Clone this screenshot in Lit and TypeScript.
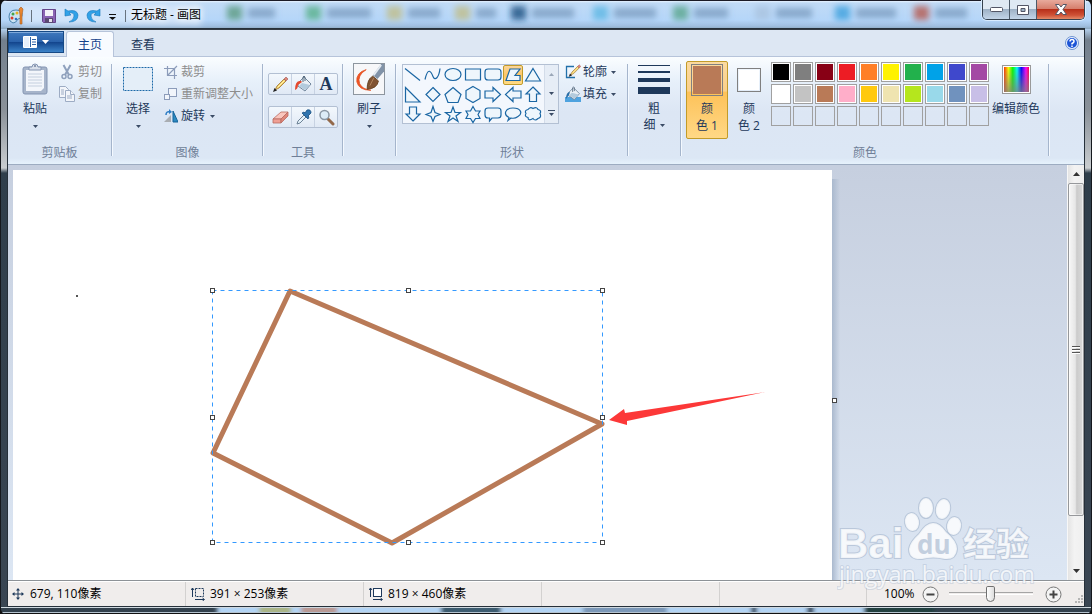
import { LitElement, html, css, svg, nothing } from "lit";
import { customElement, property, state } from "lit/decorators.js";
import { classMap } from "lit/directives/class-map.js";
import { styleMap } from "lit/directives/style-map.js";

/* A titled block of the ribbon, closed by a vertical rule. */
@customElement("ribbon-group")
class RibbonGroup extends LitElement {
  @property() label = "";
  static styles = css`
    :host {
      display: flex;
      flex-direction: column;
      box-sizing: border-box;
      position: relative;
      padding: 4px 0 3px;
    }
    :host::after {
      content: "";
      position: absolute;
      right: 0;
      top: 7px;
      bottom: 8px;
      width: 1px;
      background: #a5b5cc;
      border-right: 1px solid #f4f9ff;
    }
    .body { display: flex; flex: 1; align-items: flex-start; }
    .label { text-align: center; line-height: 16px; color: #6f7f98; padding-right: 2px; }
  `;
  render() {
    return html`<div class="body"><slot></slot></div>
      ${this.label ? html`<div class="label">${this.label}</div>` : nothing}`;
  }
}

const PALETTE = [
  ["#000000", "#7f7f7f", "#880015", "#ed1c24", "#ff7f27", "#fff200", "#22b14c", "#00a2e8", "#3f48cc", "#a349a4"],
  ["#ffffff", "#c3c3c3", "#b97a57", "#ffaec9", "#ffc90e", "#efe4b0", "#b5e61d", "#99d9ea", "#7092be", "#c8bfe7"],
  ["", "", "", "", "", "", "", "", "", ""],
];

const SHAPES: [string, string][] = [
  ["直线", "M2 3 17 15"],
  ["曲线", "M2 14C5 1 8 6 10 11S16 12 17 3"],
  ["椭圆形", "M2 9a8 6 0 1 0 16 0a8 6 0 1 0-16 0"],
  ["矩形", "M2.500 3.500h15v11h-15z"],
  ["圆角矩形", "M5 3.500h10q3 0 3 3v5q0 3-3 3H5q-3 0-3-3v-5q0-3 3-3z"],
  ["多边形", "M7 3.500h10l-5 6.500h5v5H3z"],
  ["三角形", "M10 3 17.500 15.500h-15z"],
  ["直角三角形", "M2.500 2v14.500H17z"],
  ["菱形", "M10 2 17 9 10 16 3 9z"],
  ["五边形", "M10 2 18 9 15 17H5L2 9z"],
  ["六边形", "M10 1 17 5v8l-7 4-7-4V5z"],
  ["右箭头", "M2 5.500h8V2l7.500 7-7.500 7V12.500H2z"],
  ["左箭头", "M18 5.500h-8V2l-7.500 7 7.500 7V12.500h8z"],
  ["上箭头", "M10 1.500 17 8.500h-3.500v7.500h-7V8.500H3z"],
  ["下箭头", "M10 15.500 17 8.500h-3.500V1.500h-7v7H3z"],
  ["四角星", "M10 1 12 7 17 9 12 11 10 16 8 11 3 9 8 7z"],
  ["五角星", "M10 1.500 12 7h5.500L13 10.500l2 5.500-5-3.500L5 16l2-5.500L2.500 7H8z"],
  ["六角星", "M10 1l2.500 4.500H17L15 9l2 4h-4.500L10 17l-2.500-4H3l2-4-2-3.500h4.500z"],
  ["圆角矩形标注", "M5 2.500h10q3 0 3 3v4q0 3-3 3H9l-2.500 3v-3H5q-3 0-3-3v-4q0-3 3-3z"],
  ["椭圆形标注", "M6 12C0 9 2 2.500 10 2.500S20 8 15 11c-2 1.500-5 2-7 1.500L5 15z"],
  ["云形标注", "M5 4Q7 1 10 3Q14 1 15 4Q19 5 17 8Q19 12 15 13Q12 16 10 13Q5 16 5 12Q1 11 3 8Q1 5 5 4z"],
];

/* Smudges of the desktop behind the glass caption. */
const SMUDGES: [number, number, string][] = [
  [234, 45, "#5a9a80"], [313, 62, "#55b08a"], [394, 50, "#c0bd8a"], [462, 38, "#c0bd8a"], [518, 60, "#16507f"],
  [600, 60, "#5cb8e4"], [680, 52, "#57a58c"], [762, 54, "#a9c3df"], [842, 58, "#3ba0dd"], [921, 50, "#b5594e"],
];

const arrow = (c = "#3b4c66") => html`<svg class="arrow" width="5" height="3" viewBox="0 0 5 3"><path d="M0 0h5L2.500 3z" fill=${c} /></svg>`;
const icon = (w: number, h: number, body: unknown) => html`<svg width=${w} height=${h} viewBox="0 0 ${w} ${h}" aria-hidden="true">${body}</svg>`;

const pencil = svg`<path d="M3 14 5 10 12 3l2 2-7 7z" fill="#f5cf62" stroke="#9a7437" stroke-width=".8"/><path d="m12 3 2-2 2 2-2 2z" fill="#e08679" stroke="#9d5550" stroke-width=".6"/><path d="m1 16 1.500-4 2.500 2.500z" fill="#222"/><path d="m5.500 11.500 7-7" stroke="#fff3b5"/>`;
const bucket = svg`<path d="m4 8 6-6 7 7-6 7-7-5z" fill="#e9f0f6" stroke="#71869c"/><path d="m8 8 8 2-5 5-6-4z" fill="#b3cbdd"/><path d="M9 7V2q1-2 2 0v4" fill="none" stroke="#596c7f"/>`;

@customElement("app-root")
class AppRoot extends LitElement {
  @state() private shape = 5;
  @state() private zoom = 50;
  @state() private slot1 = "#b97a57";

  static styles = css`
    :host {
      display: block;
      height: 100vh;
      font: 12px/16px "Open Sans", "Noto Sans CJK SC", sans-serif;
      color: #1e395b;
    }
    * { box-sizing: border-box; }
    svg { display: block; flex: none; }
    button { font: inherit; color: inherit; background: none; border: 0; padding: 0; margin: 0; }
    button:disabled { color: #8d8d8d; }
    .frame {
      position: relative;
      height: 100%;
      min-height: 400px;
      display: flex;
      flex-direction: column;
      padding: 0 7px 8px;
      border: 1px solid #15181d;
      border-top: 0;
      border-bottom: 0;
      border-radius: 7px 7px 6px 6px;
      overflow: hidden;
      background: linear-gradient(#b8d6f5 28px, #73808e 40px, #8a9199 110px, #c9cdd0 168px, #2f3e4b 173px, #3a4653);
    }
    .page { background: #111; height: 100%; }
    .bottom-glass { position: absolute; left: 0; bottom: 0; width: 100%; height: 8px; }
    .caption-glass { position: absolute; left: 0; top: 0; width: 100%; height: 29px; background: linear-gradient(#1b1b26 1px, #e8f3ff 1px, #c1dbf6 3px, #b5d6f9 20px, #a0bfe0 26px, #8ba7bf); }
    .caption { position: relative; height: 29px; display: flex; align-items: flex-start; }
    .quick { display: flex; align-items: center; height: 31px; gap: 7px; }
    .bar { width: 1px; height: 12px; background: #66717d; }
    .title { font-size: 12px; color: #000; line-height: 30px; margin: 0; padding-left: 5px; font-weight: 400; text-shadow: 0 0 6px #fff, 0 0 8px #fff; }
    .win { margin-left: auto; margin-right: -1px; display: flex; height: 20px; border: 1px solid #36424f; border-top: 0; border-radius: 0 0 5px 5px; overflow: hidden; box-shadow: 0 0 0 1px #d9ecff; }
    .win button { width: 27px; display: grid; place-items: center; border-right: 1px solid #4c5a69; background: linear-gradient(#dfe9f3 45%, #9fb2c6 50%, #c3d5e8); }
    .win button.close { width: 47px; border-right: 0; background: linear-gradient(#e8aa9c, #d67f6d 45%, #b8301a 50%, #cf5236 80%, #e38a68); }
    .client { position: relative; flex: 1; min-height: 0; display: flex; flex-direction: column; border-top: 1px solid #333a42; outline: 1px solid #26303a; }

    .tabs { display: flex; height: 27px; padding-top: 1px; gap: 2px; background: #dde7f3; border-bottom: 1px solid #b6c4da; }
    .file { width: 56px; height: 22px; display: flex; align-items: center; justify-content: center; gap: 5px; border: 1px solid #174a86; background: linear-gradient(#3f78bd, #2a62ab 48%, #13468e 52%, #3c83c8); box-shadow: inset 0 1px #7fa9db; }
    .tab { height: 26px; padding: 0 11px; color: #15428b; line-height: 24px; border: 1px solid transparent; border-bottom: 0; }
    .tab.on { background: #f8fbff; border-color: #b6c4da; border-radius: 3px 3px 0 0; }
    .tab.plain { padding: 0 14px; color: #1e395b; }
    .help { margin: 4px 3px 0 auto; width: 16px; height: 16px; }

    .ribbon { display: grid; grid-template-columns: 105px 151px 80px 53px 232px 53px 368px; height: 108px; background: linear-gradient(#fafdff, #e7f0fa 24px, #dce6f4 55px, #dce7f5 101px, #e6f2fc); border-bottom: 1px solid #9dacc1; }
    .big { display: flex; flex-direction: column; align-items: center; }
    .big .text { margin-top: 4px; line-height: 16px; }
    .big .arrow { margin-top: 8px; }
    .pic { height: 36px; display: grid; place-items: center; }
    .rows { display: flex; flex-direction: column; }
    .row { display: flex; align-items: center; height: 22px; gap: 3px; white-space: nowrap; }
    .row .arrow { margin-left: 2px; }
    .paste { width: 38px; margin-left: 8px; }
    .clip { margin-left: 5px; }
    .select { width: 40px; margin-left: 5px; }
    .image { margin-left: 6px; }
    .tools { display: flex; flex-direction: column; gap: 11px; margin: 12px 0 0 4px; }
    .toolrow { display: flex; width: 70px; height: 22px; border: 1px solid #b3c0d3; border-radius: 2px; background: linear-gradient(#f3f8fd, #e0e9f5); }
    .toolrow button { flex: 1; display: grid; place-items: center; }
    .toolrow button + button { border-left: 1px solid #c7d2e2; }
    .letter { font: bold 18px/18px "Liberation Serif", serif; }
    .brush { width: 50px; }
    .brush .pic svg { border: 1px solid #8d969f; }
    .gallery { display: flex; margin: 3px 0 0 5px; width: 157px; height: 60px; border: 1px solid #b3c0d3; background: #f3f7fd; }
    .cells { display: grid; grid-template-columns: repeat(7, 20px); grid-auto-rows: 20px; flex: 1; }
    .cells button { display: grid; place-items: center; border: 1px solid transparent; }
    .cells button.on { border-color: #c29b29; border-radius: 2px; background: linear-gradient(#fbd598, #fdc766 50%, #ffdb86); }
    .cells svg { overflow: visible; }
    .scrollcol { width: 14px; display: flex; flex-direction: column; background: #e6edf6; border-left: 1px solid #d3dce9; }
    .scrollcol button { flex: 1; display: grid; place-items: center; }
    .fills { margin-left: 6px; }
    .fills .row { gap: 2px; }
    .size { width: 50px; }
    .size .two { display: flex; align-items: center; gap: 4px; line-height: 16px; }
    .size .two .arrow { margin: 0; }
    .lines { display: flex; flex-direction: column; gap: 5px; width: 32px; }
    .lines i { background: #1e395b; display: block; height: 1px; }
    .lines i:nth-child(2) { height: 2px; }
    .lines i:nth-child(3) { height: 4px; }
    .lines i:nth-child(4) { height: 7px; }
    .color { width: 42px; height: 78px; margin-left: 4px; border: 1px solid transparent; border-radius: 2px; justify-content: flex-start; }
    .color .text { margin-top: 2px; line-height: 17px; }
    .color.on { border-color: #c29b29; background: linear-gradient(#fbdaa0, #fbd08a 38%, #fdc259 40%, #ffd886); }
    .color.second { margin-left: 0; }
    .chip { width: 32px; height: 32px; border: 1px solid #808080; padding: 1px; }
    .second .chip { width: 24px; height: 24px; }
    .chip i { display: block; height: 100%; }
    .palette { display: grid; grid-template-columns: repeat(10, 20px); grid-auto-rows: 20px; gap: 2px; margin: 1px 0 0 1px; }
    .palette button { border: 1px solid #a0a0a0; padding: 1px; background: #fff; }
    .palette button.empty { background: none; }
    .palette i { display: block; height: 100%; }
    .edit { margin-left: 3px; white-space: nowrap; }
    .spectrum { width: 29px; height: 29px; border: 1px solid #999; outline: 1px solid #fff; outline-offset: -2px; background: linear-gradient(transparent, #808080cc), linear-gradient(90deg, red, #ff0 20%, #0f0 36%, #0ff 52%, #00f 68%, #f0f 85%, red); }

    .work { flex: 1; min-height: 0; display: flex; background: linear-gradient(#c6cfdf, #dce6f3); }
    .view { flex: 1; min-width: 0; overflow: hidden; padding: 5px 0 0 5px; }
    .sheet { position: relative; width: 819px; height: 460px; background: #fff; }
    .sheet::after { content: ""; position: absolute; left: 100%; top: 9px; bottom: 0; width: 8px; background: linear-gradient(90deg, #aab9ce, #aab9ce00); }
    .sheet svg { position: relative; z-index: 1; overflow: visible; }
    .vscroll { width: 17px; display: flex; flex-direction: column; background: linear-gradient(90deg, #e4e4e4, #f3f3f3 40%, #efefef); border-left: 1px solid #f7f7f7; }
    .vscroll button { height: 18px; display: grid; place-items: center; }
    .thumb { flex: 334; display: grid; place-items: center; border: 1px solid #96989b; border-radius: 2px; background: linear-gradient(90deg, #f7f7f7, #e6e6e6 45%, #cbcbcb 55%, #dadada); box-shadow: inset 0 0 0 1px #fff8; }
    .gap { flex: 46; }

    .status { display: grid; grid-template-columns: 178px 178px 178px 178px 147px 1fr; height: 26px; background: #f0edec; border-top: 1px solid #8d9297; color: #000; box-shadow: inset 0 1px #fff; }
    .cell { display: flex; align-items: center; gap: 5px; padding-left: 3px; margin-top: 1px; border-right: 1px solid #d3d1d0; }
    .cell.wide { padding-left: 5px; }
    .cell.zoom { border-right: 0; gap: 7px; padding-left: 17px; position: relative; }
    .cell.zoom button { width: 17px; height: 17px; flex: none; }
    .grip { position: absolute; right: 1px; bottom: 2px; }
    input[type="range"] { -webkit-appearance: none; appearance: none; width: 84px; height: 18px; margin: 0 5px 0 3px; background: linear-gradient(#a5a5a5, #a5a5a5) center 7px / 100% 1px no-repeat, linear-gradient(#fff, #fff) center 9px / 100% 1px no-repeat; }
    input[type="range"]::-webkit-slider-thumb { -webkit-appearance: none; width: 9px; height: 16px; border: 1px solid #707070; border-radius: 2px 2px 5px 5px; background: linear-gradient(90deg, #fff, #ddd); }
    .mark { position: absolute; right: 52px; bottom: 24px; pointer-events: none; z-index: 3; }
  `;

  private clipboard() {
    return html`<ribbon-group label="剪贴板">
      <button class="big paste">
        <span class="pic">${icon(26, 32, svg`<rect x="1" y="4" width="24" height="27" rx="2" fill="#a6b4ca" stroke="#8495b2"/><path d="M4 7h18v18l-3 3H4z" fill="#f3f6fb"/><path d="M6 11h14M6 14h14M6 17h14M6 20h14M6 23h14" stroke="#c4cfde"/><path d="M7 6V4h3q0-3 3-3t3 3h3v3H7z" fill="#d9e0eb" stroke="#8495b2"/><circle cx="13" cy="3" r="1" fill="#74859f"/>`)}</span>
        <span class="text">粘贴</span>${arrow()}
      </button>
      <div class="rows clip">
        <button class="row" disabled>${icon(16, 16, svg`<path d="M4.500 1 10 11M11.500 1 6 11" stroke="#8fa1bd" stroke-width="2"/><g fill="none" stroke="#8fa1bd" stroke-width="1.500"><circle cx="5" cy="12.500" r="2"/><circle cx="11" cy="12.500" r="2"/></g>`)}剪切</button>
        <button class="row" disabled>${icon(16, 16, svg`<g fill="#f2f5fa" stroke="#9dacc4"><path d="M.5.5h6l3 3v8h-9z"/><path d="M6.500 4.500h5l4 4v7h-9z"/><path d="M11.500 4.500v4h4M2 4h3M2 6h3M2 8h3M8 10h5M8 12h5"/></g>`)}复制</button>
      </div>
    </ribbon-group>`;
  }

  private image() {
    return html`<ribbon-group label="图像">
      <button class="big select">
        <span class="pic">${icon(32, 26, svg`<rect x="1.500" y="1.500" width="29" height="23" fill="#e4eef8" stroke="#1c69a8" stroke-dasharray="2 1"/>`)}</span>
        <span class="text">选择</span>${arrow()}
      </button>
      <div class="rows image">
        <button class="row" disabled>${icon(14, 14, svg`<path d="M3.500 1v9.500H13M0 3.500h10.500V14M4 10l9-9" fill="none" stroke="#8c9cba" stroke-width="1.200"/>`)}裁剪</button>
        <button class="row" disabled>${icon(14, 14, svg`<rect x="4.500" y="1.500" width="8" height="8" fill="#f1f5fb" stroke="#8c9cba"/><rect x=".5" y="7.500" width="5" height="5" fill="#f1f5fb" stroke="#8c9cba"/>`)}重新调整大小</button>
        <button class="row">${icon(14, 14, svg`<path d="M0 13h7V6z" fill="#a9adb2"/><path d="M9 2v11h5z" fill="#2d8ac0" stroke="#15639a"/><path d="M2 6q0-4 4-3" fill="none" stroke="#2c7cc4" stroke-width="1.500"/><path d="m5 0 3 3-3 2z" fill="#2c7cc4"/>`)}旋转${arrow()}</button>
      </div>
    </ribbon-group>`;
  }

  private tools() {
    return html`<ribbon-group label="工具">
      <div class="tools">
        <div class="toolrow">
          <button aria-label="铅笔">${icon(17, 17, pencil)}</button>
          <button aria-label="用颜色填充">${icon(18, 18, svg`${bucket}<path d="M7 6Q1 5 1 15q3-1 3-5l4-3z" fill="#e5482d"/>`)}</button>
          <button class="letter" aria-label="文本">A</button>
        </div>
        <div class="toolrow">
          <button aria-label="橡皮擦">${icon(17, 17, svg`<path d="m1 10 8-7h7l-7 7z" fill="#f9c6bd" stroke="#b96a61" stroke-width=".8"/><path d="M1 10h8v4H1z" fill="#ef9f94" stroke="#b96a61" stroke-width=".8"/><path d="m9 10 7-7v4l-7 7z" fill="#de877b" stroke="#b96a61" stroke-width=".8"/>`)}</button>
          <button aria-label="颜色选取器">${icon(17, 17, svg`<path d="m2 15 1-3 6-6 2 2-6 6z" fill="#e4f1fa" stroke="#6d8296"/><path d="m7 4 6 6 1-2-1-1 3-3q0-4-4-3l-2 3-1-1z" fill="#2f74ae" stroke="#174f81" stroke-width=".8"/>`)}</button>
          <button aria-label="放大镜">${icon(17, 17, svg`<path d="m10 10 5 5" stroke="#93694a" stroke-width="3" stroke-linecap="round"/><circle cx="6.500" cy="6" r="4.500" fill="#dcecf8" stroke="#8996a4" stroke-width="1.500"/>`)}</button>
        </div>
      </div>
    </ribbon-group>
    <ribbon-group>
      <button class="big brush">
        <span class="pic">${icon(32, 32, svg`<rect width="32" height="32" fill="#f6f7f9"/><path d="M13 6Q2 9 3 19q2 9 15 9-9-1-12-7-3-9 7-15z" fill="#f05423" stroke="#e04c1c" stroke-width=".8"/><path d="M32 0v8l-7 8-5-4L29 0z" fill="#8193a8"/><path d="m29 1-8 11" stroke="#e3eaf1" stroke-width="2"/><path d="m20 13 6 5q-1 8-12 9 0-11 6-14z" fill="#805332" stroke="#65401f"/><path d="m17 23 4-8" stroke="#b4865e"/>`)}</span>
        <span class="text">刷子</span>${arrow()}
      </button>
    </ribbon-group>`;
  }

  private shapes() {
    return html`<ribbon-group label="形状">
      <div class="gallery">
        <div class="cells">
          ${SHAPES.map(([name, d], i) => html`<button class=${classMap({ on: i === this.shape })} aria-label=${name} @click=${() => (this.shape = i)}>
            ${icon(18, 18, svg`<path d=${d} fill=${i < 2 ? "none" : "#eef6fc"} stroke="#1a66a3" stroke-width="1.200" transform="translate(-1 -.5)"/>`)}
          </button>`)}
        </div>
        <div class="scrollcol">
          <button aria-label="上一行">${icon(5, 3, svg`<path d="M0 3h5L2.500 0z" fill="#9aa7b8"/>`)}</button>
          <button aria-label="下一行">${arrow()}</button>
          <button aria-label="其他">${icon(7, 7, svg`<path d="M0 .5h7" stroke="#3b4c66"/><path d="M1 3h5L3.500 6z" fill="#3b4c66"/>`)}</button>
        </div>
      </div>
      <div class="rows fills">
        <button class="row">${icon(16, 16, svg`<path d="M9 2.500H1.500v11H10" fill="none" stroke="#2170aa" stroke-width="1.300"/><g transform="translate(3 0) scale(.8)">${pencil}</g>`)}轮廓${arrow()}</button>
        <button class="row">${icon(16, 16, svg`<path d="M0 11h16v5H0z" fill="#4fa3df"/><g transform="scale(.85)">${bucket}</g><path d="M5 6Q1 6 1 13l3-4z" fill="#276ea8"/>`)}填充${arrow()}</button>
      </div>
    </ribbon-group>
    <ribbon-group>
      <button class="big size">
        <span class="pic"><span class="lines"><i></i><i></i><i></i><i></i></span></span>
        <span class="text">粗</span>
        <span class="two">细${arrow()}</span>
      </button>
    </ribbon-group>`;
  }

  private colors() {
    return html`<ribbon-group label="颜色">
      <button class="big color on"><span class="pic"><span class="chip"><i style=${styleMap({ background: this.slot1 })}></i></span></span><span class="text">颜<br>色 1</span></button>
      <button class="big color second"><span class="pic"><span class="chip"><i style=${styleMap({ background: "#ffffff" })}></i></span></span><span class="text">颜<br>色 2</span></button>
      <div class="palette">
        ${PALETTE.flat().map((c) => c
          ? html`<button aria-label=${c} @click=${() => (this.slot1 = c)}><i style=${styleMap({ background: c })}></i></button>`
          : html`<button class="empty" aria-label="自定义颜色"></button>`)}
      </div>
      <button class="big edit"><span class="pic"><span class="spectrum"></span></span><span class="text">编辑颜色</span></button>
    </ribbon-group>`;
  }

  private drawing() {
    const handles = [[199, 120], [395, 120], [589, 120], [199, 247], [589, 247], [199, 372], [395, 372], [589, 372], [821, 230]];
    return html`<svg width="819" height="460" viewBox="0 0 819 460" role="img" aria-label="画布">
      <polygon points="277,121 589,254 379,373 200,283" fill="none" stroke="#b97a57" stroke-width="5" stroke-linejoin="round" />
      <rect x="199.500" y="120.500" width="390" height="252" fill="none" stroke="#3399ff" stroke-dasharray="4 4" />
      ${handles.map(([x, y]) => svg`<rect x=${x - 1.5} y=${y - 1.5} width="4" height="4" fill="#fff" stroke="#444"/>`)}
      <path d="M596 250 611 239 612 243 752 222 614 251 614 255z" fill="#fc3838" />
      <rect x="63" y="125" width="2" height="2" fill="#555" />
    </svg>`;
  }

  render() {
    return html`<div class="page"><div class="frame">
      <svg class="caption-glass" aria-hidden="true">
        <defs><filter id="soft" x="-50%" y="-50%" width="200%" height="200%"><feGaussianBlur stdDeviation="3" /></filter></defs>
        <g filter="url(#soft)">
          ${SMUDGES.map(([x, w, c]) => svg`<rect x=${x - 8} y="6" width="15" height="14" fill=${c} opacity=".8"/><rect x=${x + 13} y="8" width=${w - 18} height="10" fill="#56799f" opacity=".5"/>`)}
          <rect x="20" y="5" width="180" height="20" fill="#e4effb" opacity=".6" />
        </g>
      </svg>
      <svg class="bottom-glass" aria-hidden="true">
        <defs><filter id="soft2" x="-5%" width="110%"><feGaussianBlur stdDeviation="2 0" /></filter></defs>
        <rect width="100%" height="8" fill="#33414d" />
        <g filter="url(#soft2)">
          <rect x="216" width="647" height="8" fill="#b3d4f4" /><rect x="258" width="32" height="8" fill="#aab588" /><rect x="300" width="36" height="8" fill="#b99a95" />
          <rect x="440" width="60" height="8" fill="#3d5c70" /><rect x="582" width="84" height="8" fill="#7b98b8" />
          <rect x="750" width="6" height="8" fill="#34475b" /><rect x="806" width="7" height="8" fill="#34475b" /><rect x="863" width="70" height="8" fill="#23403f" />
        </g>
        <rect y="1" width="100%" height="1" fill="#cfd8df" /><rect y="6" width="100%" height="1" fill="#b5c3cf" /><rect y="7" width="100%" height="1" fill="#111" />
      </svg>

      <header class="caption">
        <div class="quick">
          ${icon(16, 18, svg`<path d="M1 10Q1 3 8 3q7 0 6 6-1 3-4 3-2 4-5 4-4-1-4-6z" fill="#cce4f3" stroke="#4a83ae"/><circle cx="5" cy="7" r="1.500" fill="#48a34a"/><circle cx="9" cy="6" r="1.500" fill="#e3b022"/><circle cx="4" cy="11" r="1.500" fill="#d83b2c"/><circle cx="8" cy="12" r="1.300" fill="#2f6fc0"/><path d="M12 8v9h2V8l1-6-2-2-2 2z" fill="#e88630" stroke="#a95b1c" stroke-width=".6"/>`)}
          <span class="bar"></span>
          <button aria-label="保存">${icon(18, 16, svg`<path d="M3.500 1.500h13v13h-12l-1-1z" fill="#8a64b4" stroke="#644389"/><path d="M6 2h8v6H6z" fill="#f4f2f8"/><path d="M6 10h8v5H6z" fill="#5b4a73"/><path d="M10 11h3v3h-3z" fill="#e8e4f0"/>`)}</button>
          <button aria-label="撤消">${icon(15, 16, svg`<path d="m1 1 0 7 6-1-2-2q5-1 5 3 0 4-5 6 9 0 9-7Q13 1 4 3z" fill="#31a2e8" stroke="#1676bb" stroke-width=".6"/>`)}</button>
          <button aria-label="重做">${icon(15, 16, svg`<path d="m14 1 0 7-6-1 2-2q-5-1-5 3 0 4 5 6-9 0-9-7Q2 1 11 3z" fill="#31a2e8" stroke="#1676bb" stroke-width=".6"/>`)}</button>
          <button aria-label="自定义快速访问工具栏">${icon(10, 8, svg`<path d="M1 2.500h7" stroke="#111"/><path d="M1 5h7L4.500 8z" fill="#111"/>`)}</button>
          <span class="bar"></span>
        </div>
        <h1 class="title">无标题 - 画图</h1>
        <div class="win">
          <button aria-label="最小化">${icon(13, 5, svg`<rect x=".5" y=".5" width="12" height="4" rx="1" fill="#fff" stroke="#535666"/>`)}</button>
          <button aria-label="最大化">${icon(12, 10, svg`<path d="M.5.5h11v9H.5zM4 3.500v3h4v-3z" fill="#fff" fill-rule="evenodd" stroke="#535666"/>`)}</button>
          <button class="close" aria-label="关闭">${icon(12, 11, svg`<path d="M.5.5h3.500l2 2.500 2-2.500h3.500L8 5.500l3.500 5H8L6 8l-2 2.500H.5l3.500-5z" fill="#fff" stroke="#535666"/>`)}</button>
        </div>
      </header>

      <div class="client">
        <nav class="tabs">
          <button class="file" aria-label="画图菜单">${icon(14, 12, svg`<rect width="14" height="12" rx="1" fill="#fff"/><path d="M7.500 1v10M9 3.500h4M9 6h4M9 8.500h4" stroke="#2e63a7"/><path d="M1 1h5v10H1z" fill="#e7f0fb"/>`)}${icon(7, 4, svg`<path d="M0 0h7L3.500 4z" fill="#fff"/>`)}</button>
          <button class="tab on">主页</button>
          <button class="tab plain">查看</button>
          <button class="help" aria-label="帮助"><svg width="14" height="14" viewBox="0 0 14 14"><circle cx="7" cy="7" r="6.500" fill="#e9f2ff" stroke="#6e93cf" /><circle cx="7" cy="7" r="5" fill="#1d55d6" /><path d="M5 5.500Q5 3.500 7 3.500t2 2Q9 6.500 7 7.500v1M7 9.500V11" fill="none" stroke="#fff" stroke-width="1.500" /></svg></button>
        </nav>
        <section class="ribbon">${this.clipboard()}${this.image()}${this.tools()}${this.shapes()}${this.colors()}</section>
        <main class="work">
          <div class="view"><div class="sheet">${this.drawing()}</div></div>
          <div class="vscroll">
            <button aria-label="向上滚动">${icon(7, 4, svg`<path d="M0 4h7L3.500 0z" fill="#333"/>`)}</button>
            <div class="thumb">${icon(8, 8, svg`<path d="M0 .5h8M0 3.500h8M0 6.500h8" stroke="#555"/><path d="M0 1.500h8M0 4.500h8M0 7.500h8" stroke="#fff"/>`)}</div>
            <div class="gap"></div>
            <button aria-label="向下滚动">${icon(7, 4, svg`<path d="M0 0h7L3.500 4z" fill="#333"/>`)}</button>
          </div>
        </main>
        <footer class="status">
          <div class="cell">${icon(14, 14, svg`<path d="M7 2v10M2 7h10" stroke="#1e395b"/><path d="M5 3.500 7 1l2 2.500zM5 10.500 7 13l2-2.500zM3.500 5 1 7l2.500 2zM10.500 5 13 7l-2.500 2z" fill="#1e395b"/>`)}679, 110像素</div>
          <div class="cell wide">${icon(14, 14, svg`<path d="M1.500 1v9M4 12.500h9" stroke="#1e395b"/><path d="M0 3 1.500 1 3 3M11.500 11l2 1.500-2 1.500" fill="none" stroke="#1e395b"/><rect x="4.500" y="1.500" width="8" height="8" fill="none" stroke="#1e395b" stroke-dasharray="2 1"/>`)}391 × 253像素</div>
          <div class="cell wide">${icon(14, 14, svg`<path d="M1.500 1v9M4 12.500h9" stroke="#1e395b"/><path d="M0 3 1.500 1 3 3M11.500 11l2 1.500-2 1.500" fill="none" stroke="#1e395b"/><rect x="4.500" y="1.500" width="8" height="8" fill="#fff" stroke="#1e395b"/>`)}819 × 460像素</div>
          <div class="cell"></div>
          <div class="cell"></div>
          <div class="cell zoom">
            <label for="zoom">100%</label>
            <button aria-label="缩小">${icon(17, 17, svg`<circle cx="8.500" cy="8.500" r="7.500" fill="#f4f4f4" stroke="#777"/><path d="M4.500 8.500h8" stroke="#444" stroke-width="2"/>`)}</button>
            <input id="zoom" type="range" min="0" max="100" .value=${String(this.zoom)} @input=${(e: Event) => (this.zoom = Number((e.target as HTMLInputElement).value))}>
            <button aria-label="放大">${icon(17, 17, svg`<circle cx="8.500" cy="8.500" r="7.500" fill="#f4f4f4" stroke="#777"/><path d="M4.500 8.500h8M8.500 4.500v8" stroke="#444" stroke-width="2"/>`)}</button>
            <svg class="grip" width="9" height="9" viewBox="0 0 9 9"><path d="M7 1h2M4 4h2M7 4h2M1 7h2M4 7h2M7 7h2" stroke="#b5b5b5" stroke-width="2" /></svg>
          </div>
        </footer>
      </div>

      <svg class="mark" width="202" height="102" viewBox="0 0 202 102" aria-label="Baidu 经验">
        <g fill="#fff" fill-opacity=".78" stroke="#9fb0c8" stroke-opacity=".55" paint-order="stroke" stroke-width="2">
          <ellipse cx="75" cy="34" rx="7" ry="9" transform="rotate(-10 75 34)" /><ellipse cx="89" cy="20" rx="7" ry="10" /><ellipse cx="106" cy="21" rx="7" ry="10" transform="rotate(12 106 21)" /><ellipse cx="117" cy="38" rx="7" ry="9" transform="rotate(10 117 38)" />
          <path d="M96 35Q103 35 109 44Q120 53 120 61Q119 72 108 71Q96 68 85 71Q72 72 72 61Q73 54 82 46Q89 35 96 35z" />
          <text x="1" y="70" font-family="Liberation Sans, sans-serif" font-weight="700" font-size="42">Bai</text>
          <text x="126" y="68" font-family="Noto Sans CJK SC, sans-serif" font-weight="700" font-size="33">经验</text>
          <text x="2" y="95" font-family="Open Sans, sans-serif" font-size="23" stroke-opacity=".35">jingyan.baidu.com</text>
        </g>
        <text x="80" y="66" font-family="Open Sans, sans-serif" font-weight="700" font-size="26" fill="#c3cfdf">du</text>
      </svg>
    </div></div>`;
  }
}
